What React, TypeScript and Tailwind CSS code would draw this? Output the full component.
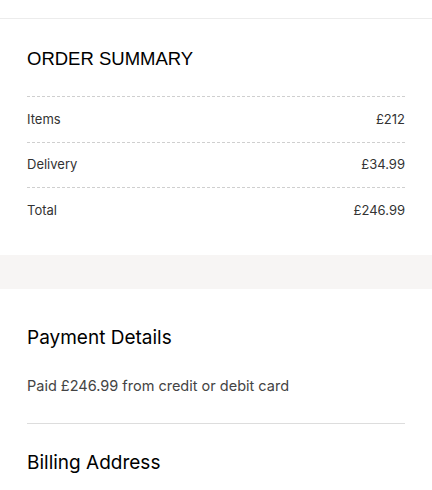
const font = { fontFamily: "Inter, 'Noto Sans', sans-serif" };

function SummaryRow({ label, value, last }: { label: string; value: string; last?: boolean }) {
  return (
    <div
      className={
        "flex items-center justify-between h-[45.5px] text-[13px] text-[#333333] " +
        (last ? "" : "border-b border-dashed border-[#cfcfcf]")
      }
    >
      <span>{label}</span>
      <span>{value}</span>
    </div>
  );
}

export default function App() {
  return (
    <div className="w-full min-h-screen bg-white" style={font}>
      <div className="h-[19px] border-b border-[#ececec]" />

      {/* Order summary */}
      <section className="px-[27px] pt-[28px] pb-[21px]">
        <h2 className="text-[18.5px] leading-[24px] text-black font-['Liberation_Sans',Arial,sans-serif] mb-[25px]">
          ORDER SUMMARY
        </h2>
        <div className="border-t border-dashed border-[#cfcfcf]">
          <SummaryRow label="Items" value="£212" />
          <SummaryRow label="Delivery" value="£34.99" />
          <SummaryRow label="Total" value="£246.99" last />
        </div>
      </section>

      <div className="h-[34px] bg-[#f7f5f4]" />

      {/* Payment */}
      <section className="px-[27px] pt-[37px]">
        <h2 className="text-[19px] leading-[24px] text-black">Payment Details</h2>
        <p className="mt-[26px] text-[14.5px] leading-[20px] text-[#444444]">
          Paid £246.99 from credit or debit card
        </p>
        <div className="mt-[27px] border-t border-[#dddddd]" />
        <h2 className="mt-[27px] text-[19px] leading-[24px] text-black">Billing Address</h2>
      </section>
    </div>
  );
}
